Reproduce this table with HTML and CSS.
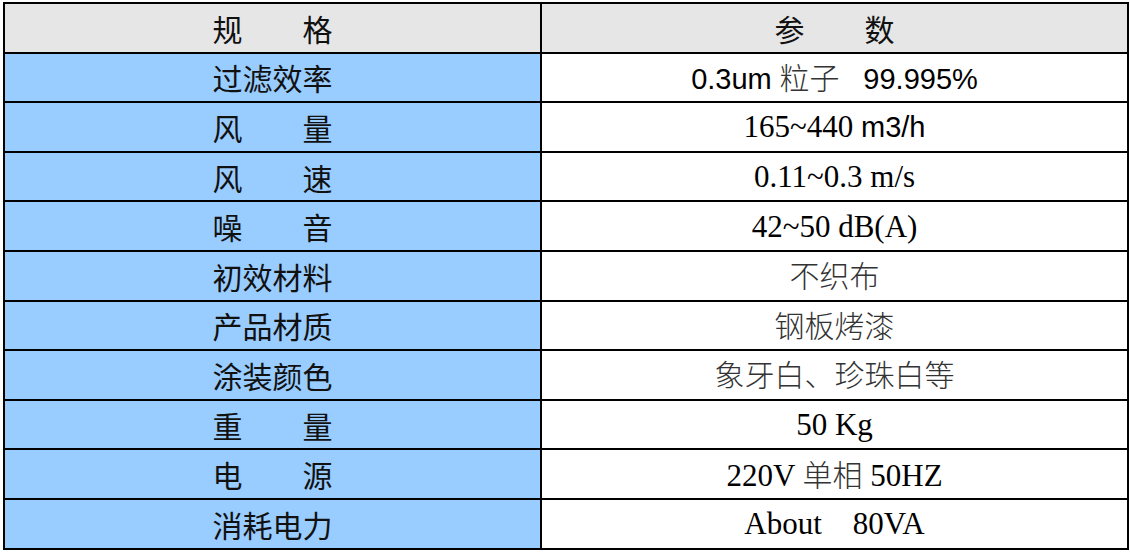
FILE: index.html
```html
<!DOCTYPE html>
<html lang="zh-CN">
<head>
<meta charset="utf-8">
<title>规格参数</title>
<link rel="stylesheet" href="styles.css">
</head>
<body>
<div class="wrap">
<table class="spec">
  <colgroup><col class="c1"><col class="c2"></colgroup>
  <thead>
    <tr><th>规　　格</th><th>参　　数</th></tr>
  </thead>
  <tbody>
    <tr><td class="k">过滤效率</td><td class="v"><span class="ar">0.3um</span> <span class="cj">粒子</span> <span class="ar">&nbsp;&nbsp;99.995%</span></td></tr>
    <tr><td class="k">风　　量</td><td class="v">165~440 <span class="ar">m3/h</span></td></tr>
    <tr><td class="k">风　　速</td><td class="v">0.11~0.3 m/s</td></tr>
    <tr><td class="k">噪　　音</td><td class="v">42~50 dB(A)</td></tr>
    <tr><td class="k">初效材料</td><td class="v"><span class="cj">不织布</span></td></tr>
    <tr><td class="k">产品材质</td><td class="v"><span class="cj">钢板烤漆</span></td></tr>
    <tr><td class="k">涂装颜色</td><td class="v"><span class="cj">象牙白、珍珠白等</span></td></tr>
    <tr><td class="k">重　　量</td><td class="v">50 Kg</td></tr>
    <tr><td class="k">电　　源</td><td class="v">220V <span class="cj">单相</span> 50HZ</td></tr>
    <tr><td class="k">消耗电力</td><td class="v">About&nbsp;&nbsp;&nbsp; 80VA</td></tr>
  </tbody>
</table>
</div>
</body>
</html>
```
FILE: styles.css
```css
html, body {
  margin: 0;
  padding: 0;
  background: #ffffff;
}
.wrap {
  padding: 2px 0 0 3px;
}
.spec {
  border-collapse: collapse;
  width: 1124px;
  table-layout: fixed;
}
.c1 { width: 537px; }
.c2 { width: 587px; }
.spec th, .spec td {
  border: 2px solid #000;
  height: 47.6px;
  padding: 0;
  text-align: center;
  vertical-align: middle;
}
.spec th {
  background: #e6e6e6;
  font-family: "Noto Sans CJK SC", sans-serif;
  font-weight: 400;
  font-size: 30px;
  color: #111;
  line-height: 1;
}
.spec td.k {
  background: #99ccff;
  font-family: "Noto Sans CJK SC", sans-serif;
  font-size: 30px;
  color: #111;
  line-height: 1;
}
.spec td.v {
  background: #fff;
  font-family: "Liberation Serif", "Noto Sans CJK SC", serif;
  font-size: 31px;
  color: #000;
  line-height: 1;
}
.spec .ar {
  font-family: "Liberation Sans", sans-serif;
  font-size: 29px;
  color: #000;
}
.spec .cj {
  font-family: "Noto Sans CJK SC", sans-serif;
  font-weight: 300;
  font-size: 30px;
  color: #333;
}
```
